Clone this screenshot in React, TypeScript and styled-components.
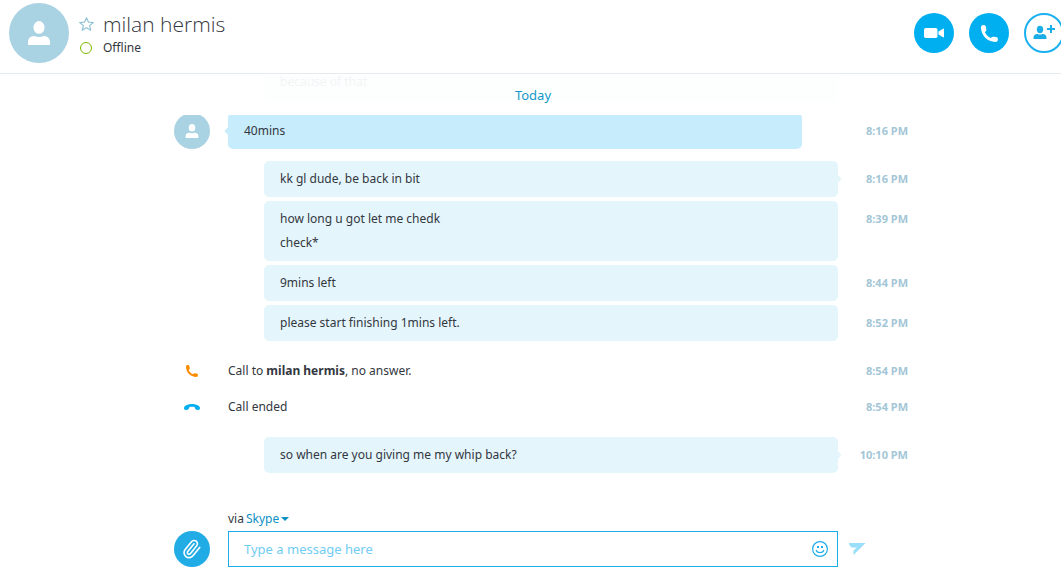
import React from "react";
import styled, { createGlobalStyle } from "styled-components";

const GlobalStyle = createGlobalStyle`
  *, *::before, *::after { box-sizing: border-box; }
  body {
    margin: 0;
    background: #fff;
    color: #333740;
    font-family: "Noto Sans", "Open Sans", sans-serif;
    font-size: 12px;
    line-height: 24px;
  }
  button { padding: 0; border: 0; background: none; cursor: pointer; font: inherit; }
  svg { display: block; }
  h1, p { margin: 0; }
`;

const Page = styled.div`
  display: flex;
  flex-direction: column;
  min-height: 100vh;
  overflow: hidden;
`;

const Header = styled.header`
  display: flex;
  align-items: flex-start;
  justify-content: space-between;
  height: 74px;
  padding: 3px 0 0 9px;
  border-bottom: 1px solid #e3ebee;
`;

const Contact = styled.div`
  display: flex;
  gap: 10px;
`;

const Avatar = styled.div<{ $size: number }>`
  display: grid;
  place-items: center;
  flex: none;
  width: ${(p) => p.$size}px;
  height: ${(p) => p.$size}px;
  border-radius: 50%;
  background: #a9d3e2;
  color: #fff;
`;

const ContactInfo = styled.div`
  display: grid;
  grid-template-columns: 14px auto;
  grid-template-rows: 32px 16px;
  column-gap: 10px;
  align-items: center;
  justify-items: center;
  padding-top: 5px;
`;

const ContactName = styled.h1`
  justify-self: start;
  font-family: "Open Sans", sans-serif;
  font-size: 21px;
  font-weight: 300;
  line-height: 32px;
`;

const Status = styled.p`
  justify-self: start;
  line-height: 16px;
`;

const PresenceDot = styled.span`
  width: 12px;
  height: 12px;
  border: 1px solid #7fba00;
  border-radius: 50%;
`;

const Actions = styled.div`
  display: flex;
  gap: 15px;
  margin-right: -3px;
  padding-top: 10px;
`;

const RoundButton = styled.button<{ $outline?: boolean; $size?: number; $color?: string }>`
  display: grid;
  place-items: center;
  flex: none;
  width: ${(p) => p.$size ?? 40}px;
  height: ${(p) => p.$size ?? 40}px;
  border: ${(p) => (p.$outline ? "2px solid #1cb0ee" : "0")};
  border-radius: 50%;
  background: ${(p) => (p.$outline ? "#fff" : p.$color ?? "#00aff0")};
  color: ${(p) => (p.$outline ? "#1bade6" : "#fff")};
`;

const Main = styled.main`
  display: flex;
  flex: 1;
  flex-direction: column;
  width: 100%;
  max-width: 755px;
  margin: 0 auto;
  padding-left: 21px;
`;

const Row = styled.div`
  display: grid;
  grid-template-columns: 36px minmax(0, 1fr) 70px;
  align-items: start;
`;

const DayStrip = styled.div`
  position: relative;
  height: 41px;
  overflow: hidden;
`;

const PastMessage = styled.p`
  margin: 0 70px 0 90px;
  padding: 0 16px 12px;
  border-radius: 0 0 5px 5px;
  background: #fdffff;
  color: #f2f5f5;
  line-height: 16px;
`;

const DayLabel = styled.p`
  position: absolute;
  inset: 9px 70px auto 54px;
  color: #1598c9;
  font-size: 13px;
  text-align: center;
`;

const Log = styled.div`
  overflow: hidden;
`;

const Group = styled.div`
  display: flex;
  flex-direction: column;
  gap: 4px;
  margin-bottom: 12px;
`;

const FirstGroup = styled(Group)`
  margin-top: -2px;
`;

const Bubble = styled.div<{ $incoming?: boolean; $tail?: boolean }>`
  position: relative;
  margin: ${(p) => (p.$incoming ? "0 36px 0 18px" : "0 0 0 54px")};
  padding: 6px 16px;
  border-radius: 5px;
  background: ${(p) => (p.$incoming ? "#c7ecfc" : "#e4f5fc")};

  &::after {
    content: "";
    display: ${(p) => (p.$tail ? "block" : "none")};
    position: absolute;
    top: 14px;
    ${(p) => (p.$incoming ? "left" : "right")}: -2px;
    width: 8px;
    height: 8px;
    background: inherit;
    transform: rotate(45deg);
    border-radius: 1px;
  }
`;

const Time = styled.time`
  padding-top: 6px;
  color: #a3c6d6;
  font-size: 11px;
  font-weight: 700;
  text-align: right;
`;

const Events = styled.div`
  margin-bottom: 12px;
`;

const EventIcon = styled.div`
  display: grid;
  place-items: center;
  height: 36px;
`;

const EventText = styled.p`
  padding: 6px 0 6px 18px;
`;

const Composer = styled.form`
  margin-top: auto;
  padding-bottom: 17px;
`;

const Via = styled.p`
  display: flex;
  gap: 2px;
  padding-left: 54px;
`;

const ViaButton = styled.button`
  display: flex;
  align-items: center;
  gap: 2px;
  color: #0b8fc4;
`;

const Field = styled.div`
  display: flex;
  align-items: center;
  height: 36px;
  margin-left: 18px;
  padding: 0 9px 0 15px;
  border: 1px solid #1cade8;
`;

const MessageInput = styled.input`
  flex: 1;
  min-width: 0;
  padding: 0;
  border: 0;
  outline: 0;
  background: none;
  color: #333740;
  font: inherit;
  font-size: 13px;

  &::placeholder { color: #72cdf3; opacity: 1; }
`;

const EmojiButton = styled.button`
  color: #1cade8;
`;

const SendButton = styled.button`
  display: flex;
  align-items: center;
  height: 36px;
  padding-left: 11px;
  color: #99dff9;
`;

const PersonIcon = ({ size }: { size: number }) => (
  <svg width={size} height={size} viewBox="0 0 24 25" fill="currentColor" aria-hidden="true">
    <ellipse cx="12" cy="6.700" rx="5.800" ry="6.700" />
    <path d="M.6 25v-3.200c0-3.800 2.600-5.700 6-6.100 1.400-.2 2 .9 5.400.9s4-1.100 5.400-.9c3.400.4 6 2.300 6 6.100V25z" />
  </svg>
);

const HandsetIcon = ({ size, color = "currentColor" }: { size: number; color?: string }) => (
  <svg width={size} height={size} viewBox="0 0 17 17" fill={color} aria-hidden="true">
    <path d="M0 2.600C0 1 .9.100 2.400.100 4 .100 4.600.6 4.900 2l.4 2.200c.2 1.100-.1 1.700-.8 2.200-.6.5-.5.9-.1 1.600 1 1.900 2.700 3.600 4.600 4.600.7.4 1.100.5 1.600-.1.5-.7 1.100-1 2.200-.8l2.200.4c1.400.3 1.900.9 1.900 2.500 0 1.500-.9 2.400-2.500 2.400C6.500 17 0 10.500 0 2.600z" />
  </svg>
);

type Msg = { time: string; lines: string[] };

const sent: Msg[] = [
  { time: "8:16 PM", lines: ["kk gl dude, be back in bit"] },
  { time: "8:39 PM", lines: ["how long u got let me chedk", "check*"] },
  { time: "8:44 PM", lines: ["9mins left"] },
  { time: "8:52 PM", lines: ["please start finishing 1mins left."] },
];

const lastSent: Msg[] = [{ time: "10:10 PM", lines: ["so when are you giving me my whip back?"] }];

const SentGroup = ({ messages }: { messages: Msg[] }) => (
  <Group>
    {messages.map((m, i) => (
      <Row key={m.time}>
        <span />
        <Bubble $tail={i === 0}>
          {m.lines.map((l) => (
            <p key={l}>{l}</p>
          ))}
        </Bubble>
        <Time>{m.time}</Time>
      </Row>
    ))}
  </Group>
);

export default function App() {
  return (
    <Page>
      <GlobalStyle />
      <Header>
        <Contact>
          <Avatar $size={60}>
            <PersonIcon size={24} />
          </Avatar>
          <ContactInfo>
            <svg width="15" height="14" viewBox="0 0 15 14" fill="none" stroke="#93c3d6" strokeWidth="1.200" strokeLinejoin="round" aria-hidden="true">
              <path d="M7.500.8l1.900 4.300 4.900.4-3.700 3.100 1.200 4.700-4.300-2.500-4.300 2.500 1.200-4.700L.7 5.500l4.900-.4z" />
            </svg>
            <ContactName>milan hermis</ContactName>
            <PresenceDot />
            <Status>Offline</Status>
          </ContactInfo>
        </Contact>
        <Actions>
          <RoundButton type="button" aria-label="Video call">
            <svg width="20" height="10" viewBox="0 0 20 10" fill="currentColor" aria-hidden="true">
              <rect width="13.500" height="10" rx="1.800" />
              <path d="M14.500 3.500 18.600.9q1.400-.8 1.400.5v7.200q0 1.300-1.400.5L14.500 6.500z" />
            </svg>
          </RoundButton>
          <RoundButton type="button" aria-label="Call">
            <HandsetIcon size={17} />
          </RoundButton>
          <RoundButton type="button" $outline aria-label="Add people">
            <svg width="22" height="16" viewBox="0 1 22 16" fill="currentColor" aria-hidden="true">
              <ellipse cx="7" cy="5.500" rx="3.200" ry="3.700" />
              <path d="M.5 15v-1.600c0-2.200 1.500-3.300 3.600-3.500.8 0 1.200.5 2.900.5s2.100-.5 2.900-.5c2.100.2 3.600 1.300 3.600 3.500V15z" />
              <path d="M17 1h2v3h3v2h-3v3h-2V6h-3V4h3z" />
            </svg>
          </RoundButton>
        </Actions>
      </Header>

      <Main>
        <DayStrip>
          <PastMessage>because of that</PastMessage>
          <DayLabel>Today</DayLabel>
        </DayStrip>

        <Log>
          <FirstGroup>
            <Row>
              <Avatar $size={36}>
                <PersonIcon size={14} />
              </Avatar>
              <Bubble $incoming $tail>
                <p>40mins</p>
              </Bubble>
              <Time>8:16 PM</Time>
            </Row>
          </FirstGroup>

          <SentGroup messages={sent} />

          <Events>
            <Row>
              <EventIcon>
                <HandsetIcon size={12} color="#ff8c00" />
              </EventIcon>
              <EventText>
                Call to <b>milan hermis</b>, no answer.
              </EventText>
              <Time>8:54 PM</Time>
            </Row>
            <Row>
              <EventIcon>
                <svg width="16" height="6" viewBox="0 0 16 6" fill="#00aff0" aria-hidden="true">
                  <path d="M8 0c3.500 0 7 1.300 7.800 3.300.4 1.100.1 2.100-.6 2.500-.9.400-2.900 0-3.700-.6-.6-.5-.2-1.500-.8-1.900-1-.6-4.400-.6-5.400 0-.6.4-.2 1.400-.8 1.900-.8.6-2.800 1-3.700.6-.7-.4-1-1.400-.6-2.500C1 1.300 4.500 0 8 0z" />
                </svg>
              </EventIcon>
              <EventText>Call ended</EventText>
              <Time>8:54 PM</Time>
            </Row>
          </Events>

          <SentGroup messages={lastSent} />
        </Log>

        <Composer onSubmit={(e) => e.preventDefault()}>
          <Via>
            via
            <ViaButton type="button">
              Skype
              <svg width="8" height="4" viewBox="0 0 8 4" fill="currentColor" aria-hidden="true">
                <path d="M0 0h8L4 4z" />
              </svg>
            </ViaButton>
          </Via>
          <Row>
            <RoundButton type="button" $size={36} $color="#22ace5" aria-label="Attach a file">
              <svg width="20" height="20" viewBox="0 0 24 24" fill="none" stroke="currentColor" strokeWidth="1.900" strokeLinecap="round" strokeLinejoin="round" aria-hidden="true">
                <path
                  transform="rotate(-6 12 12)"
                  d="m21.440 11.050-9.190 9.190a6 6 0 0 1-8.490-8.490l8.570-8.570A4 4 0 1 1 18 8.840l-8.590 8.570a2 2 0 0 1-2.830-2.830l8.490-8.480"
                />
              </svg>
            </RoundButton>
            <Field>
              <MessageInput type="text" aria-label="Message" placeholder="Type a message here" />
              <EmojiButton type="button" aria-label="Insert emoticon">
                <svg width="16" height="16" viewBox="0 0 16 16" fill="none" stroke="currentColor" aria-hidden="true">
                  <circle cx="8" cy="8" r="7.400" strokeWidth="1.200" />
                  <path d="M4.300 9.300c.8 2.900 6.600 2.900 7.400 0" strokeWidth="1.200" strokeLinecap="round" />
                  <path d="M5 5h2v2H5zM9 5h2v2H9z" fill="currentColor" stroke="none" />
                </svg>
              </EmojiButton>
            </Field>
            <SendButton type="submit" aria-label="Send">
              <svg width="17" height="12" viewBox="0 0 17 12" fill="currentColor" aria-hidden="true">
                <path d="M0 0h16.500L4.500 12V7.500L8 4.500H2.500L0 1.500z" />
              </svg>
            </SendButton>
          </Row>
        </Composer>
      </Main>
    </Page>
  );
}
